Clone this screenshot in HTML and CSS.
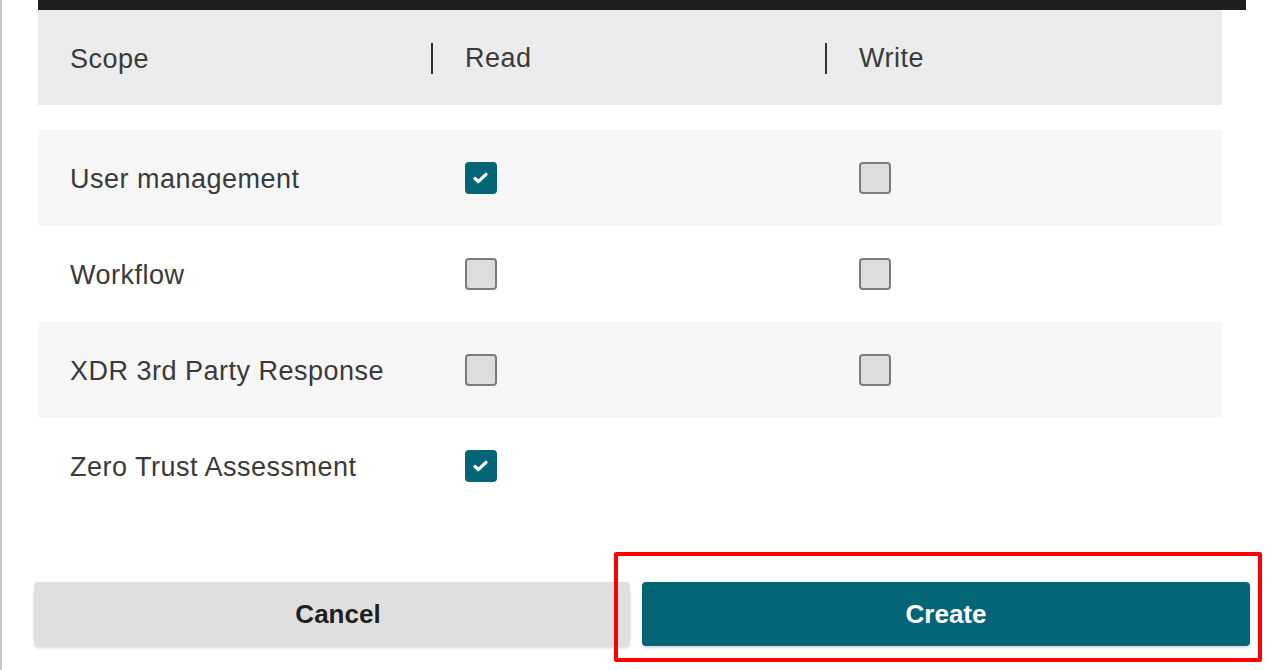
FILE: index.html
```html
<!DOCTYPE html>
<html lang="en">
<head>
  <meta charset="UTF-8" />
  <title>API key scopes</title>
  <link rel="stylesheet" href="styles.css">
</head>
<body>

<div class="panel">
  <div class="topbar"></div>

  <div class="scope-table">
    <div class="scope-head">
      <div class="cell">Scope</div>
      <div class="cell divided">Read</div>
      <div class="cell divided">Write</div>
    </div>

    <div class="scope-row">
      <div class="cell">User management</div>
      <div class="cell"><span class="check on"><svg viewBox="0 0 28 28"><path d="M8 14.5l3.3 3.2 7.7-7.4" /></svg></span></div>
      <div class="cell"><span class="check"></span></div>
    </div>
    <div class="scope-row">
      <div class="cell">Workflow</div>
      <div class="cell"><span class="check"></span></div>
      <div class="cell"><span class="check"></span></div>
    </div>
    <div class="scope-row">
      <div class="cell">XDR 3rd Party Response</div>
      <div class="cell"><span class="check"></span></div>
      <div class="cell"><span class="check"></span></div>
    </div>
    <div class="scope-row">
      <div class="cell">Zero Trust Assessment</div>
      <div class="cell"><span class="check on"><svg viewBox="0 0 28 28"><path d="M8 14.5l3.3 3.2 7.7-7.4" /></svg></span></div>
      <div class="cell"></div>
    </div>
  </div>

  <div class="actions">
    <button class="btn btn-cancel">Cancel</button>
    <button class="btn btn-create">Create</button>
  </div>

  <!-- highlight annotation -->
  <div class="highlight"></div>
</div>

</body>
</html>
```

FILE: styles.css
```css
body {
  margin: 0;
  font-family: "Liberation Sans", Arial, sans-serif;
  background: #ffffff;
  color: #3a3a3a;
}

.panel {
  position: relative;
  height: 670px;
  border-left: 2px solid #c9c9c9;
  overflow: hidden;
}

.topbar {
  margin-left: 36px;
  width: 1208px;
  height: 10px;
  background: #1f1f1f;
}

.scope-table {
  margin-left: 36px;
  width: 1184px;
}

.scope-head,
.scope-row {
  display: grid;
  grid-template-columns: 394px 394px 1fr;
  align-items: center;
}

.scope-head {
  height: 95px;
  background: #ebebeb;
  margin-bottom: 25px;
}

.scope-row {
  height: 96px;
}

.scope-row:nth-child(even) {
  background: #f6f6f6;
}

.cell {
  padding-left: 32px;
  padding-top: 3px;
  font-size: 27px;
  letter-spacing: 0.5px;
  display: flex;
  align-items: center;
}

.scope-head .divided {
  border-left: 2px solid #333;
  height: 31px;
  margin-left: -1px;
  padding-top: 0;
  margin-top: 2px;
}

.check {
  width: 28px;
  height: 28px;
  border: 2px solid #7b7b7b;
  border-radius: 4px;
  background: #dedcdd;
  display: inline-flex;
  margin-left: 1px;
  margin-top: -3px;
}

.check.on {
  background: #046577;
  border-color: #046577;
}

.check svg {
  width: 28px;
  height: 28px;
  fill: none;
  stroke: #ffffff;
  stroke-width: 3.2;
  stroke-linecap: round;
  stroke-linejoin: round;
}

.actions {
  display: flex;
  gap: 12px;
  margin-top: 68px;
  margin-left: 32px;
}

.btn {
  height: 64px;
  border: none;
  border-radius: 4px;
  font-family: "Liberation Sans", Arial, sans-serif;
  font-size: 26px;
  font-weight: bold;
  box-shadow: 0 2px 3px rgba(0, 0, 0, 0.15);
  cursor: pointer;
}

.btn-cancel {
  width: 596px;
  padding-left: 18px;
  background: #e0dfe0;
  color: #1f1f1f;
}

.btn-create {
  width: 608px;
  background: #046577;
  color: #ffffff;
}

.highlight {
  position: absolute;
  left: 612px;
  top: 552px;
  width: 640px;
  height: 102px;
  border: 4px solid #ff0000;
  border-radius: 2px;
}
```
